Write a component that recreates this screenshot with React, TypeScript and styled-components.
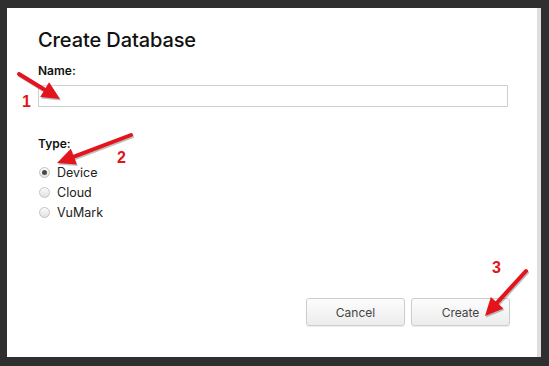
import React from "react";
import styled, { createGlobalStyle } from "styled-components";

const GlobalStyle = createGlobalStyle`
  html, body {
    margin: 0;
    padding: 0;
    background: #2f2f2f;
  }
  body {
    font-family: "Inter", "Liberation Sans", sans-serif;
  }
`;

const Stage = styled.div`
  position: relative;
  width: 549px;
  height: 366px;
  padding: 8px 0 0 7px;
  box-sizing: border-box;
  overflow: hidden;
`;

const Dialog = styled.div`
  display: flex;
  flex-direction: column;
  width: 534px;
  height: 349px;
  box-sizing: border-box;
  background: #ffffff;
  border-right: 4px solid #dedede;
  padding: 20px 27px 31px 31px;
`;

const Title = styled.h1`
  margin: 0 0 11px;
  font-size: 20px;
  line-height: 24px;
  font-weight: 500;
  color: #111;
  letter-spacing: -0.1px;
`;

const Label = styled.div`
  font-size: 12px;
  line-height: 16px;
  font-weight: 600;
  color: #111;
  margin-bottom: 6px;
`;

const TextInput = styled.input`
  display: block;
  width: 470px;
  height: 22px;
  box-sizing: border-box;
  border: 1px solid #cfcfcf;
  margin: 0 0 29px;
  padding: 0 6px;
  font: inherit;
  outline: none;
`;

const RadioList = styled.div`
  display: flex;
  flex-direction: column;
  gap: 4px;
  margin-top: 6px;
`;

const RadioRow = styled.label`
  display: flex;
  align-items: center;
  gap: 7px;
  height: 16px;
  font-size: 12.5px;
  color: #222;
`;

const RadioDot = styled.span<{ $checked?: boolean }>`
  width: 11px;
  height: 11px;
  border-radius: 50%;
  box-sizing: border-box;
  border: 1px solid #c4c4c4;
  background: linear-gradient(#fafafa, #e2e2e2);
  display: flex;
  align-items: center;
  justify-content: center;
  margin-left: 1px;

  &::after {
    content: "";
    width: 5px;
    height: 5px;
    border-radius: 50%;
    background: ${(p) => (p.$checked ? "#4a4a4a" : "transparent")};
  }
`;

const Spacer = styled.div`
  flex: 1;
`;

const Footer = styled.div`
  display: flex;
  justify-content: flex-end;
  gap: 6px;
`;

const Button = styled.button`
  width: 99px;
  height: 28px;
  border: 1px solid #cdcdcd;
  border-radius: 3px;
  background: linear-gradient(#fdfdfd, #ececec);
  box-shadow: 0 1px 1px rgba(0, 0, 0, 0.08);
  font: inherit;
  font-size: 12px;
  color: #444;
`;

const Overlay = styled.svg`
  position: absolute;
  left: 0;
  top: 0;
  pointer-events: none;
`;

const Num = styled.span<{ $x: number; $y: number }>`
  position: absolute;
  left: ${(p) => p.$x}px;
  top: ${(p) => p.$y}px;
  font-family: "Liberation Sans", sans-serif;
  font-weight: 700;
  font-size: 16px;
  line-height: 16px;
  color: #e0151c;
`;

type Pt = [number, number];

const Arrow = ({ from, to }: { from: Pt; to: Pt }) => {
  const dx = to[0] - from[0];
  const dy = to[1] - from[1];
  const len = Math.hypot(dx, dy);
  const ux = dx / len;
  const uy = dy / len;
  const head = 18;
  const half = 8.5;
  const bx = to[0] - ux * head;
  const by = to[1] - uy * head;
  const px = -uy;
  const py = ux;
  const pts = [
    `${to[0]},${to[1]}`,
    `${bx + px * half},${by + py * half}`,
    `${bx - px * half},${by - py * half}`,
  ].join(" ");
  return (
    <g>
      <g transform="translate(1,1.5)" opacity="0.25">
        <line x1={from[0]} y1={from[1]} x2={bx} y2={by} stroke="#000" strokeWidth="4" strokeLinecap="round" />
        <polygon points={pts} fill="#000" />
      </g>
      <line x1={from[0]} y1={from[1]} x2={bx + ux * 2} y2={by + uy * 2} stroke="#e3141c" strokeWidth="4" strokeLinecap="round" />
      <polygon points={pts} fill="#e3141c" />
    </g>
  );
};

const App = () => {
  return (
    <Stage>
      <GlobalStyle />
      <Dialog>
        <Title>Create Database</Title>
        <Label>Name:</Label>
        <TextInput type="text" />
        <Label>Type:</Label>
        <RadioList>
          <RadioRow>
            <RadioDot $checked />
            Device
          </RadioRow>
          <RadioRow>
            <RadioDot />
            Cloud
          </RadioRow>
          <RadioRow>
            <RadioDot />
            VuMark
          </RadioRow>
        </RadioList>
        <Spacer />
        <Footer>
          <Button>Cancel</Button>
          <Button>Create</Button>
        </Footer>
      </Dialog>

      <Overlay width="549" height="366" viewBox="0 0 549 366">
        <Arrow from={[19, 74]} to={[60, 99]} />
        <Arrow from={[131, 135]} to={[57, 163]} />
        <Arrow from={[526, 271]} to={[485, 316]} />
      </Overlay>
      <Num $x={22} $y={94}>1</Num>
      <Num $x={117} $y={150}>2</Num>
      <Num $x={492} $y={260}>3</Num>
    </Stage>
  );
};

export default App;
